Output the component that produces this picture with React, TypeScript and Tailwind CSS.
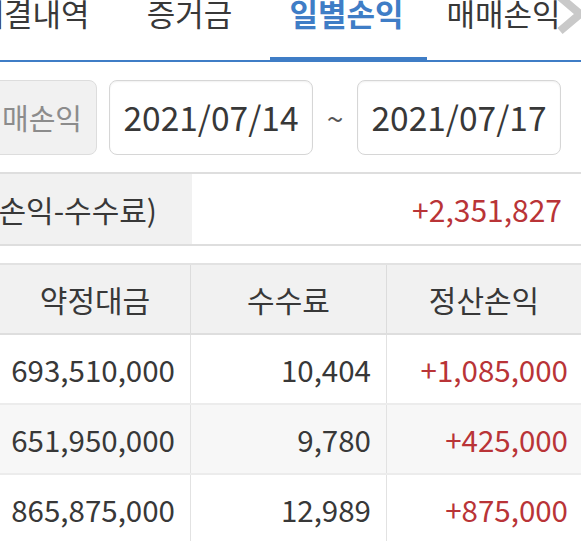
import React from "react";

const FONT = { fontFamily: '"Noto Sans CJK KR", "Noto Sans", sans-serif' };

const tabs = ["체결내역", "증거금", "일별손익", "매매손익"];

const rows = [
  { amount: "693,510,000", fee: "10,404", pnl: "+1,085,000" },
  { amount: "651,950,000", fee: "9,780", pnl: "+425,000" },
  { amount: "865,875,000", fee: "12,989", pnl: "+875,000" },
];

export default function App() {
  return (
    <div className="relative w-[581px] h-[541px] overflow-hidden bg-white text-[#383838]" style={FONT}>
      {/* 탭 */}
      <div className="relative h-[62px] border-b-2 border-[#3f7dc6]">
        <div className="flex h-full -ml-[46px]">
          {tabs.map((t, i) => (
            <div key={t} className="relative w-[157px] shrink-0 h-full flex items-start justify-center">
              <span className={"text-[31px] leading-[25px] whitespace-nowrap " + (i === 2 ? "font-bold text-[#3f7dc6]" : "")}>{t}</span>
              {i === 2 && <div className="absolute left-[2px] right-[-2px] bottom-[-2px] h-[5px] bg-[#3f7dc6]" />}
            </div>
          ))}
        </div>
        <svg className="absolute right-[-9px] top-[-5px]" width="36" height="40" viewBox="0 0 36 40">
          <polyline points="6,2 26,19 6,36" fill="none" stroke="#c9c9c9" strokeWidth="8" />
        </svg>
      </div>

      {/* 기간 선택 */}
      <div className="flex items-center mt-[18px] h-[75px]">
        <div className="-ml-[60px] w-[157px] h-full shrink-0 flex items-center justify-end pr-[14px] rounded-lg border border-[#dddddd] bg-[#f1f1f1] text-[#8c8c8c] text-[29px] whitespace-nowrap">
          매매손익
        </div>
        <div className="ml-[12px] w-[204px] h-full shrink-0 flex items-center justify-center rounded-lg border border-[#d6d6d6] bg-white text-[33.5px] shadow-[inset_0_1px_2px_rgba(0,0,0,0.06)]">
          2021/07/14
        </div>
        <div className="w-[44px] text-center text-[30px] text-[#555]">~</div>
        <div className="w-[204px] h-full shrink-0 flex items-center justify-center rounded-lg border border-[#d6d6d6] bg-white text-[33.5px] shadow-[inset_0_1px_2px_rgba(0,0,0,0.06)]">
          2021/07/17
        </div>
      </div>

      {/* 합계 */}
      <div className="mt-[17px] flex h-[74px] border-y-2 border-[#dedede]">
        <div className="w-[192px] shrink-0 bg-[#f1f1f1] flex items-center justify-end pr-[35px] text-[30px] whitespace-nowrap overflow-hidden">
          (매매손익-수수료)
        </div>
        <div className="flex-1 flex items-center justify-end pr-[19px] text-[30px] text-[#b93437]">+2,351,827</div>
      </div>

      {/* 표 */}
      <div className="mt-[17px] border-t-2 border-[#e2e2e2]">
        <div className="grid grid-cols-[191px_196px_194px] h-[70px] bg-[#f1f1f1] border-b-2 border-[#dedede] text-[30px]">
          <div className="flex items-center justify-center border-r border-[#dcdcdc]">약정대금</div>
          <div className="flex items-center justify-center border-r border-[#dcdcdc]">수수료</div>
          <div className="flex items-center justify-center">정산손익</div>
        </div>
        {rows.map((r, i) => (
          <div
            key={r.amount}
            className={"grid grid-cols-[191px_196px_194px] h-[70px] border-b-2 border-[#ececec] text-[29.5px] " + (i === 1 ? "bg-[#f7f7f7]" : "bg-white")}
          >
            <div className="flex items-center justify-end pr-[15px] border-r border-[#e2e2e2]">{r.amount}</div>
            <div className="flex items-center justify-end pr-[15px] border-r border-[#e2e2e2]">{r.fee}</div>
            <div className="flex items-center justify-end pr-[13px] text-[#b93437]">{r.pnl}</div>
          </div>
        ))}
      </div>
    </div>
  );
}
